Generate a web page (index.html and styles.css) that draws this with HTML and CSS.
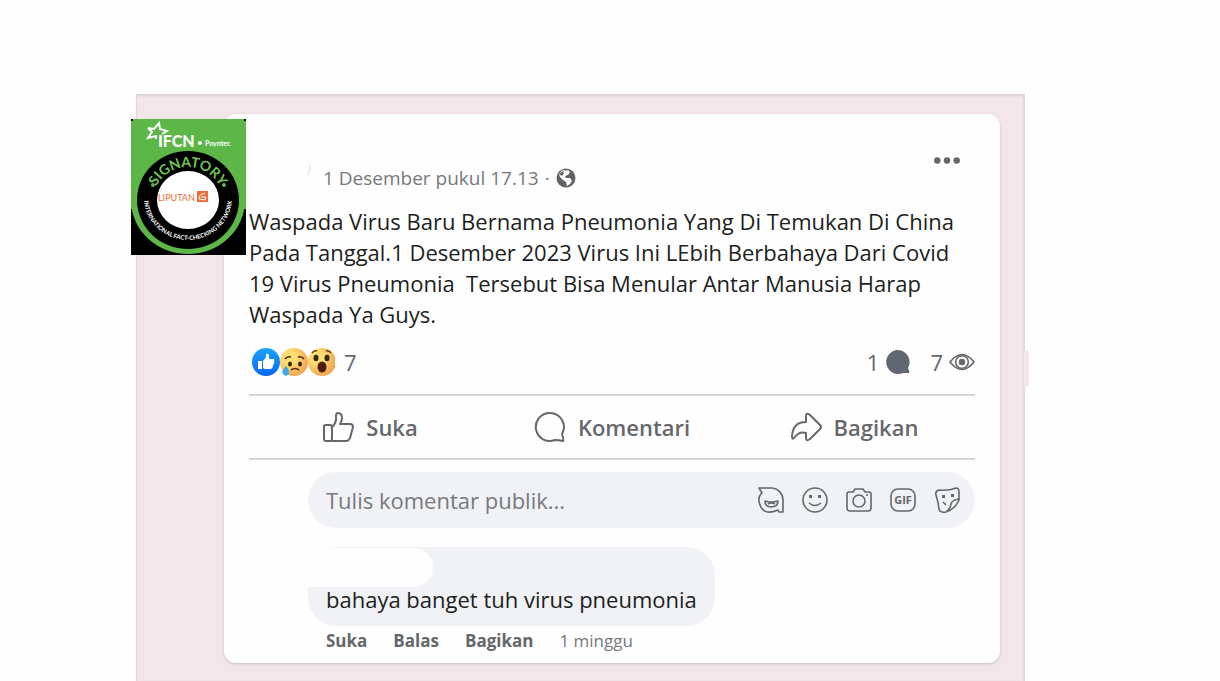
FILE: index.html
```html
<!DOCTYPE html>
<html lang="id">
<head>
<meta charset="utf-8">
<title>Waspada Virus Baru</title>
<link rel="stylesheet" href="styles.css">
</head>
<body>
<main class="backdrop">
  <svg class="badge" viewBox="0 0 115 136" role="img" aria-label="IFCN Signatory Liputan6">
    <defs>
      <path id="arc-top" d="M22 82 A35 34 0 0 1 92 82"/>
      <path id="arc-bottom" d="M14 70 A44 42 0 1 0 100 70"/>
    </defs>
    <rect width="115" height="136" fill="#000"/>
    <path d="M2 0H113V2H115V90H0V2H2Z" fill="#5cb648"/>
    <ellipse cx="57" cy="81" rx="57" ry="54" fill="#5cb648"/>
    <ellipse cx="57" cy="81" rx="51" ry="49" fill="#000"/>
    <ellipse cx="57" cy="81" rx="31" ry="29" fill="#fff"/>
    <path d="M17 9L23 10L28 4L29 10L36 12L31 15M17 9L21 13L17 19L25 17L25 20" fill="none" stroke="#fff" stroke-width="2"/>
    <text class="badge-name" x="27" y="28">IFCN</text>
    <circle cx="69" cy="24" r="2" fill="#fff"/>
    <text class="badge-small" x="74" y="27">Poynter.</text>
    <text class="badge-title"><textPath href="#arc-top" startOffset="50%" text-anchor="middle">SIGNATORY</textPath></text>
    <circle cx="22" cy="66" r="2" fill="#5cb648"/>
    <circle cx="93" cy="66" r="2" fill="#5cb648"/>
    <text class="badge-ring"><textPath href="#arc-bottom" startOffset="50%" text-anchor="middle">INTERNATIONAL FACT-CHECKING NETWORK</textPath></text>
    <text class="badge-brand" x="27" y="82">LIPUTAN</text>
    <rect x="66" y="72" width="11" height="11" fill="#ee6b32"/>
    <path d="M74 74L69 76L68 80L74 81L75 78L70 78" fill="none" stroke="#fff" stroke-width="1"/>
  </svg>
  <span class="tab"></span>
  <article class="card">
    <header class="head">
      <p class="meta"><svg class="tick" viewBox="0 0 4 14" aria-hidden="true"><path d="M3 1Q4 5 1 12" fill="none" stroke="#ddd"/></svg><time>1 Desember pukul 17.13</time><span>·</span>
        <svg class="globe" viewBox="0 0 20 20" aria-hidden="true"><circle cx="10" cy="10" r="9.5" fill="#606266"/><path d="M7 2Q10 3 12 2L14 4L12 7L9 8L10 10L14 10L16 13L14 16L11 18L10 14L7 12L4 9L3 6Q5 3 7 2Z" fill="#fff"/><path d="M3 6L7 3L8 5L6 8Z" fill="#606266"/></svg></p>
      <button class="more" aria-label="Opsi lainnya"><svg viewBox="0 0 26 8"><g fill="#65676b"><circle cx="4" cy="4" r="3"/><circle cx="13" cy="4" r="3"/><circle cx="22" cy="4" r="3"/></g></svg></button>
    </header>
    <p class="post">Waspada Virus Baru Bernama Pneumonia Yang Di Temukan Di China<br>Pada Tanggal.1 Desember 2023 Virus Ini LEbih Berbahaya Dari Covid<br>19 Virus Pneumonia&nbsp; Tersebut Bisa Menular Antar Manusia Harap<br>Waspada Ya Guys.</p>
    <div class="stats">
      <svg class="faces" viewBox="0 0 86 30" role="img" aria-label="Suka, Sedih, Kaget">
        <defs>
          <linearGradient id="blue" x2="0" y2="1"><stop stop-color="#18a5fe"/><stop offset="1" stop-color="#0866f0"/></linearGradient>
          <radialGradient id="gold" cx=".35" cy=".35" r=".8"><stop offset=".3" stop-color="#ffdc70"/><stop offset="1" stop-color="#ef9448"/></radialGradient>
        </defs>
        <circle cx="17" cy="15" r="14" fill="url(#blue)"/>
        <path d="M9 14h4v8H9zM14 14L17 10V7Q20 6 20 9V12H25Q26 13 25 15Q26 17 24 18Q24 22 21 22H16L14 21Z" fill="#fff"/>
        <circle cx="45" cy="15" r="14" fill="url(#gold)"/>
        <g fill="#322718"><ellipse cx="41" cy="17" rx="2" ry="2.5"/><ellipse cx="51" cy="17" rx="2" ry="2.5"/></g>
        <path d="M36 12Q38 9 42 10M49 10Q53 9 55 12M42 23Q46 20 50 23" fill="none" stroke="#4b2b13" stroke-width="1.6"/>
        <path d="M37 19Q42 25 39 28Q36 30 34 27Q32 24 37 19Z" fill="#36a9ea"/>
        <circle cx="73" cy="15" r="14" fill="url(#gold)"/>
        <g fill="#322718"><ellipse cx="67" cy="11" rx="2.5" ry="3.3"/><ellipse cx="78" cy="11" rx="2.5" ry="3.3"/></g>
        <ellipse cx="73" cy="20" rx="4.5" ry="5.5" fill="#4b1e11"/>
        <path d="M63 6Q65 3 68 4M77 4Q80 3 82 6" fill="none" stroke="#6b3917" stroke-width="1.5"/>
      </svg>
      <span class="total">7</span>
      <span class="count">1 <svg class="talk" viewBox="0 0 26 26" role="img" aria-label="komentar"><path d="M13 1A12 12 0 1 0 18 24L24 24Q25 23 23 19A12 12 0 0 0 13 1Z" fill="#606770"/></svg></span>
      <span class="count">7 <svg class="eye" viewBox="0 0 26 18" role="img" aria-label="dilihat"><g fill="none" stroke="#65676b" stroke-width="1.6"><path d="M1 9Q13 -6 25 9Q13 24 1 9Z"/><circle cx="13" cy="9" r="6.3"/></g><circle cx="13" cy="9" r="3.2" fill="#65676b"/></svg></span>
    </div>
    <div class="actions">
      <button><svg viewBox="0 0 32 32"><path d="M2 15Q2 14 4 14H8Q10 14 10 16V28Q10 30 8 30H4Q2 30 2 28ZM9 17Q13 14 14 9V5Q14 2 16 2Q20 2 20 7Q20 10 18 13H28Q31 13 31 16L28 27Q27 30 24 30H10"/></svg>Suka</button>
      <button><svg viewBox="0 0 32 32"><path d="M16 2A14 14 0 1 0 21 29Q25 29 29 30Q30 29 28 23A14 14 0 0 0 16 2Z"/></svg>Komentari</button>
      <button><svg viewBox="0 0 32 32"><path d="M16 5Q16 1 20 4L30 14Q32 16 30 18L20 28Q16 31 16 27V22Q9 20 4 27Q2 29 2 25Q3 11 16 11Z"/></svg>Bagikan</button>
    </div>
    <div class="composer">
      <input type="text" aria-label="Tulis komentar publik" placeholder="Tulis komentar publik...">
      <button aria-label="Stiker avatar"><svg viewBox="0 0 28 28"><path d="M2 2H15A12 12 0 0 1 26 14V26H22L21 24Q7 30 3 19Q0 11 5 7ZM8 15Q14 17 21 15Q21 21 14 21Q8 21 8 15ZM11 18Q14 16 18 18"/></svg></button>
      <button aria-label="Emoji"><svg viewBox="0 0 28 28"><circle cx="14" cy="14" r="12"/><path d="M8 17Q14 22 20 17"/><path class="solid" d="M8 9h3v3H8zM17 9h3v3h-3z"/></svg></button>
      <button aria-label="Foto"><svg viewBox="0 0 28 28"><path d="M4 6H8L10 3H18L20 6H24Q26 6 26 8V22Q26 25 23 25H5Q2 25 2 22V8Q2 6 4 6Z"/><circle cx="14" cy="15" r="6"/><path d="M21 9h2"/></svg></button>
      <button aria-label="GIF"><svg viewBox="0 0 28 28"><rect x="2" y="3" width="24" height="22" rx="7"/><text class="gif" x="14" y="18" text-anchor="middle">GIF</text></svg></button>
      <button aria-label="Stiker"><svg viewBox="0 0 28 28"><path d="M6 4Q15 5 23 2Q26 2 26 6V14Q22 23 13 26Q7 27 6 23Q5 15 3 9Q2 5 6 4ZM26 13Q19 14 18 18Q18 22 13 26M10 16L13 19"/><path class="solid" d="M9 9h3v3H9zM18 8h3v3h-3z"/></svg></button>
    </div>
    <section class="reply">
      <p class="bubble">bahaya banget tuh virus pneumonia</p>
      <div class="links"><a href="#">Suka</a><a href="#">Balas</a><a href="#">Bagikan</a><time>1 minggu</time></div>
    </section>
  </article>
</main>
</body>
</html>
```
FILE: styles.css
```css
* { box-sizing: border-box; }
body {
  margin: 0;
  padding: 94px 195px 0 136px;
  min-height: 100vh;
  display: flex;
  background: #fefefe;
  color: #1c1e21;
  font-family: "Open Sans", "Noto Sans", sans-serif;
  font-size: 22px;
}
p { margin: 0; }
button { border: 0; padding: 0; background: none; font: inherit; color: inherit; cursor: pointer; }
svg { display: block; flex: none; }
.backdrop {
  position: relative;
  flex: 1;
  padding: 20px 25px 18px 88px;
  background: #f3e6ea;
  box-shadow: inset 0 2px 2px #ddd2d5, inset -2px 0 1px #e6dadd, inset 1px 0 1px #e6dadd;
}
.tab {
  position: absolute;
  top: 256px;
  right: -4px;
  width: 5px;
  height: 37px;
  background: #f3e6ea;
  border-radius: 0 4px 4px 0;
}
.badge { position: absolute; left: -5px; top: 25px; width: 115px; height: 136px; }
.badge text { font-family: Lato, sans-serif; font-weight: 700; fill: #fff; }
.badge .badge-name { font-size: 16px; font-weight: 900; }
.badge .badge-small { font-size: 7px; }
.badge .badge-title { font-size: 14px; fill: #6cc552; }
.badge .badge-ring { font-size: 6px; }
.badge .badge-brand { font-size: 9px; font-weight: 400; fill: #ee6b32; }
.card {
  padding: 0 25px 9px;
  background: #fefefe;
  border-radius: 12px;
  box-shadow: 0 1px 3px #cdbfc4;
}
.head { display: flex; justify-content: space-between; align-items: flex-start; height: 92px; padding: 0 14px 0 58px; }
.meta { display: flex; align-items: center; gap: 6px; padding-top: 49px; font-size: 19px; line-height: 30px; color: #77797d; }
.tick { width: 4px; height: 14px; margin-right: 6px; align-self: flex-start; }
.globe { width: 20px; height: 20px; }
.more { padding-top: 42px; }
.more svg { width: 28px; height: 9px; }
.post { line-height: 31px; }
.stats { display: flex; align-items: center; height: 64px; color: #65676b; }
.faces { width: 86px; height: 30px; }
.total { margin: 0 auto 0 9px; }
.count { display: flex; align-items: center; gap: 6px; margin-left: 19px; }
.talk { width: 26px; height: 26px; }
.eye { width: 26px; height: 18px; }
.actions {
  display: grid;
  grid-template-columns: 1fr 1fr 1fr;
  border: solid #d3d5d7;
  border-width: 2px 0;
  height: 66px;
  color: #65676b;
  font-weight: 600;
}
.actions button { display: flex; align-items: center; justify-content: center; gap: 12px; }
.actions svg { width: 32px; height: 32px; fill: none; stroke: #65676b; stroke-width: 2; stroke-linejoin: round; }
.composer {
  display: flex;
  align-items: center;
  gap: 16px;
  height: 56px;
  margin: 12px 0 19px 59px;
  padding: 0 14px 0 18px;
  border-radius: 28px;
  background: #f0f2f5;
}
.composer input { flex: 1; min-width: 0; padding: 0; border: 0; outline: 0; background: none; font: inherit; color: #1c1e21; }
.composer input::placeholder { color: #77797d; opacity: 1; }
.composer svg { width: 28px; height: 28px; fill: none; stroke: #65676b; stroke-width: 1.6; stroke-linejoin: round; }
.composer .solid { fill: #65676b; stroke: none; }
.gif { font: 700 11px "Open Sans", sans-serif; fill: #65676b; stroke: none; }
.reply { padding-left: 59px; }
.bubble {
  position: relative;
  width: fit-content;
  padding: 37px 18px 12px;
  border-radius: 28px;
  background: #f0f2f5;
  line-height: 30px;
}
.bubble::before {
  content: "";
  position: absolute;
  left: 0;
  top: 1px;
  width: 125px;
  height: 39px;
  border-radius: 0 20px 20px 0;
  background: #fefefe;
}
.links { display: flex; gap: 26px; padding: 2px 18px 0; font-size: 17px; line-height: 26px; color: #77797d; }
.links a { color: #65676b; font-weight: 700; text-decoration: none; }
```
